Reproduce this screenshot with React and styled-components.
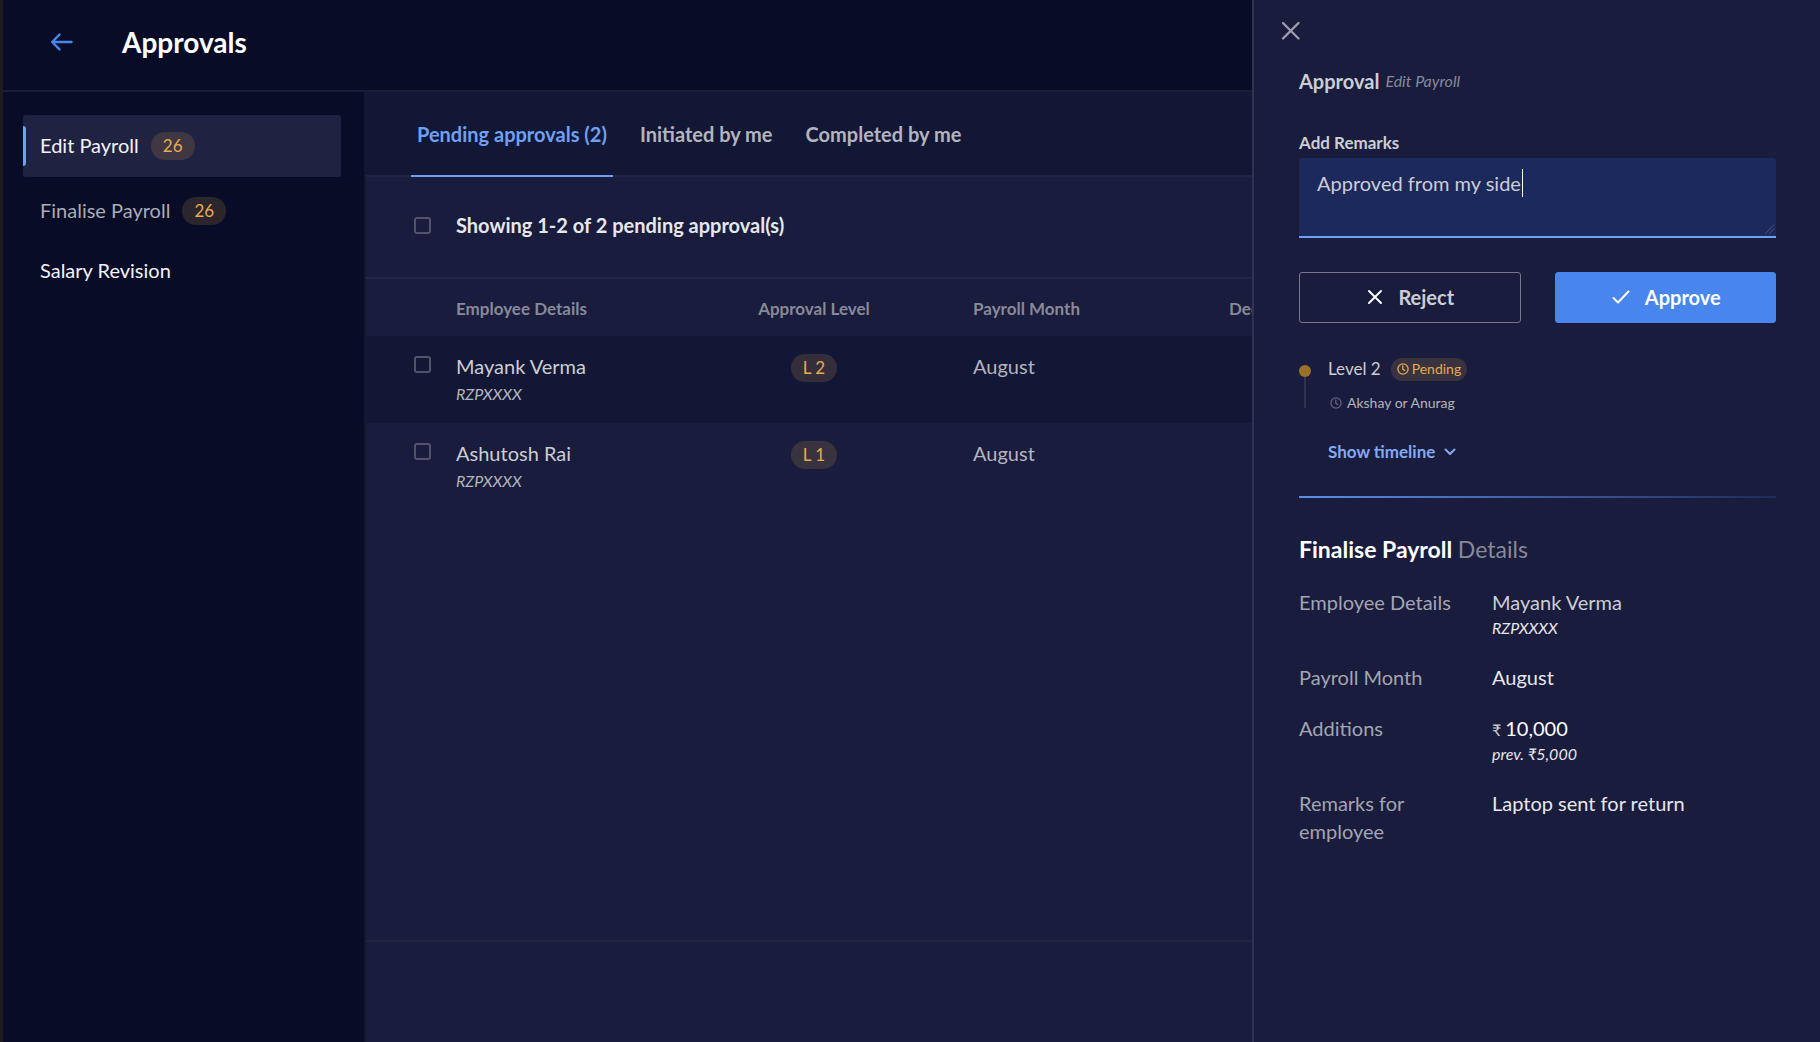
import React, { useLayoutEffect, useRef, useState } from "react";
import styled, { createGlobalStyle, css } from "styled-components";

const c = {
  base: "#080c26",
  band: "#131736",
  panel: "#191c3c",
  line: "#20243f",
  selected: "#1f2341",
  blue: "#4885ed",
  blueSoft: "#6ea0f4",
  white: "#ffffff",
  bright: "#e6e7eb",
  text: "#cccdd4",
  soft: "#b3b4bf",
  muted: "#878999",
  amber: "#e9a951",
};

const Global = createGlobalStyle`
  *, *::before, *::after { box-sizing: border-box; }
  body { margin: 0; background: ${c.base}; }
  body, button, input, textarea { font-family: Lato, "Open Sans", sans-serif; }
  h1, h2, p, ul, dl, dd { margin: 0; padding: 0; }
`;

const Page = styled.div`
  display: flex;
  flex-direction: column;
  min-height: 100vh;
  border-left: 3px solid #1d1d1f;
  background: ${c.base};
  color: ${c.text};
  font-size: 20px;
  line-height: 28px;
  overflow: hidden;
`;

const Header = styled.header`
  display: flex;
  align-items: center;
  gap: 47px;
  height: 92px;
  padding: 0 46px 6px;
  border-bottom: 2px solid #191d37;
`;

const IconButton = styled.button`
  display: flex;
  padding: 0;
  border: 0;
  background: none;
  color: ${(p) => p.$color};
  cursor: pointer;
`;

const Title = styled.h1`
  color: ${c.white};
  font-size: 28px;
  line-height: 36px;
  font-weight: 700;
`;

const Body = styled.div`
  display: flex;
  flex: 1;
`;

const Sidebar = styled.nav`
  flex: none;
  width: 363px;
  padding: 23px 23px 23px 20px;
  border-right: 2px solid #13172f;
`;

const NavList = styled.ul`
  display: flex;
  flex-direction: column;
  gap: 3px;
  list-style: none;
`;

const NavLink = styled.a`
  position: relative;
  display: flex;
  align-items: center;
  gap: 12px;
  padding: 11px 17px 13px;
  border-radius: 3px;
  color: ${(p) => p.$color};
  text-decoration: none;
  ${(p) =>
    p.$active &&
    css`
      background: ${c.selected};
      &::before {
        content: "";
        position: absolute;
        left: 0;
        top: 11px;
        bottom: 11px;
        width: 3px;
        border-radius: 0 3px 3px 0;
        background: ${c.blueSoft};
      }
    `}
`;

const Pill = styled.span`
  display: inline-flex;
  align-items: center;
  justify-content: center;
  gap: 3px;
  height: ${(p) => (p.$small ? 23 : 28)}px;
  padding: ${(p) => (p.$small ? "0 6px" : "0 12px")};
  border-radius: 14px;
  background: rgba(233, 169, 81, 0.16);
  color: ${c.amber};
  font-size: ${(p) => (p.$small ? 14 : 17)}px;
`;

const NavPill = styled(Pill)`
  margin: 6px 0 4px;
`;

const Main = styled.main`
  display: flex;
  flex: 1;
  flex-direction: column;
  min-width: 0;
  background: ${c.panel};
`;

const Tabs = styled.div`
  display: flex;
  gap: 21px;
  padding: 0 45px;
  border-bottom: 2px solid ${c.line};
  background: ${c.band};
`;

const Tab = styled.button`
  height: 85px;
  margin-bottom: -2px;
  padding: 0 6px;
  border: 0;
  border-bottom: 2px solid ${(p) => (p.$active ? c.blueSoft : "transparent")};
  background: none;
  color: ${(p) => (p.$active ? c.blueSoft : c.soft)};
  font-size: 20px;
  line-height: 28px;
  font-weight: 700;
  cursor: pointer;
`;

const Summary = styled.label`
  display: flex;
  align-items: center;
  gap: 25px;
  height: 102px;
  padding: 0 48px 4px;
  border-bottom: 2px solid #202746;
  color: ${c.bright};
  font-weight: 700;
`;

const Check = styled.input.attrs({ type: "checkbox" })`
  appearance: none;
  display: block;
  width: 17px;
  height: 17px;
  margin: 0;
  border: 2px solid #515469;
  border-radius: 3px;
  &:checked {
    background: ${c.blue};
  }
`;

const Table = styled.table`
  width: 100%;
  border-collapse: collapse;
  table-layout: fixed;
`;

const Th = styled.th`
  width: ${(p) => (p.$w ? `${p.$w}px` : "auto")};
  height: 57px;
  padding: 3px 0 0;
  color: ${c.muted};
  font-size: 17px;
  font-weight: 700;
  text-align: ${(p) => (p.$center ? "center" : "left")};
`;

const Row = styled.tr`
  background: ${(p) => (p.$shaded ? c.band : "transparent")};
`;

const Td = styled.td`
  padding: 16px 0 15px;
  vertical-align: top;
  text-align: ${(p) => (p.$center ? "center" : "left")};
  color: ${(p) => (p.$soft ? c.soft : c.text)};
`;

const CheckTd = styled(Td)`
  padding: 20px 48px;
`;

const Small = styled.p`
  color: ${(p) => (p.$bright ? c.bright : c.soft)};
  font-size: 16px;
  line-height: ${(p) => (p.$bright ? 24 : 28)}px;
  font-style: italic;
`;

const Footer = styled.footer`
  height: 102px;
  margin-top: auto;
  border-top: 2px solid ${c.line};
`;

const Drawer = styled.aside`
  position: fixed;
  top: 0;
  right: 0;
  bottom: 0;
  width: 568px;
  padding: 18px 44px 24px 45px;
  border-left: 2px solid #2f3250;
  background: ${c.panel};
  overflow-y: auto;
`;

const CloseRow = styled.div`
  display: flex;
  margin-left: -21px;
`;

const DrawerTitle = styled.h2`
  display: flex;
  align-items: center;
  gap: 6px;
  margin-top: 23px;
  font-size: 20px;
  line-height: 28px;
  font-weight: 700;
`;

const TitleNote = styled.em`
  color: ${c.muted};
  font-size: 16px;
  font-weight: 400;
`;

const FieldLabel = styled.label`
  display: block;
  margin-top: 36px;
  padding-bottom: 3px;
  font-size: 17px;
  line-height: 24px;
  font-weight: 700;
`;

const Field = styled.div`
  position: relative;
  display: flex;
`;

const TextArea = styled.textarea`
  width: 100%;
  height: 80px;
  padding: 11px 18px;
  border: 0;
  border-bottom: 2px solid ${c.blueSoft};
  border-radius: 3px 3px 0 0;
  outline: 0;
  background: #1c295c;
  color: ${c.text};
  caret-color: transparent;
  font-size: 20px;
  line-height: 28px;
  resize: none;
`;

const Caret = styled.span`
  position: absolute;
  top: 11px;
  width: 1px;
  height: 28px;
  background: ${c.white};
`;

const Grip = styled.svg`
  position: absolute;
  right: 1px;
  bottom: 4px;
`;

const Actions = styled.div`
  display: grid;
  grid-template-columns: 1fr 1fr;
  gap: 34px;
  margin-top: 34px;
`;

const Action = styled.button`
  display: flex;
  align-items: center;
  justify-content: center;
  gap: 15px;
  height: 51px;
  padding: 0 4px 2px 6px;
  border: 1px solid ${(p) => (p.$primary ? c.blue : "#767889")};
  border-radius: 3px;
  background: ${(p) => (p.$primary ? c.blue : "transparent")};
  color: ${(p) => (p.$primary ? c.white : c.text)};
  font-size: 20px;
  line-height: 28px;
  font-weight: 700;
  cursor: pointer;
  svg {
    color: ${c.white};
  }
`;

const Timeline = styled.div`
  display: grid;
  grid-template-columns: 12px 1fr;
  column-gap: 17px;
  margin-top: 32px;
`;

const Track = styled.div`
  display: flex;
  flex-direction: column;
  align-items: center;
  padding-top: 10px;
  &::before {
    content: "";
    width: 12px;
    height: 12px;
    border-radius: 50%;
    background: #9b7128;
  }
  &::after {
    content: "";
    width: 2px;
    height: 31px;
    background: #30334f;
  }
`;

const Level = styled.div`
  display: flex;
  align-items: center;
  gap: 10px;
  font-size: 17px;
  line-height: 28px;
`;

const Approvers = styled.div`
  display: flex;
  align-items: center;
  gap: 5px;
  margin-top: 7px;
  padding-left: 2px;
  color: ${c.soft};
  font-size: 14px;
  line-height: 26px;
  svg {
    color: #60637a;
  }
`;

const TimelineToggle = styled.button`
  display: flex;
  align-items: center;
  gap: 9px;
  margin-top: 22px;
  padding: 0;
  border: 0;
  background: none;
  color: #82a9f3;
  font-size: 17px;
  line-height: 28px;
  font-weight: 700;
  cursor: pointer;
`;

const Divider = styled.div`
  height: 2px;
  margin-top: 30px;
  background: linear-gradient(90deg, #5a8fe6, #222b5c);
`;

const DetailsTitle = styled.h2`
  margin-top: 35px;
  color: ${c.white};
  font-size: 23px;
  line-height: 32px;
  font-weight: 700;
`;

const Light = styled.span`
  color: ${c.muted};
  font-weight: 400;
`;

const Details = styled.dl`
  display: grid;
  grid-template-columns: 163px 1fr;
  column-gap: 30px;
  row-gap: 23px;
  margin-top: 23px;
`;

const Term = styled.dt`
  color: #a3a5b2;
`;

const Value = styled.dd`
  color: ${(p) => p.$color || c.bright};
`;

const Rupee = styled.span`
  margin-right: 4px;
  color: ${c.text};
  font-size: 16px;
  line-height: 0;
`;

const Icon = ({ w, h, box, sw = 2, children }) => (
  <svg
    width={w}
    height={h}
    viewBox={box || `0 0 ${w} ${h}`}
    fill="none"
    stroke="currentColor"
    strokeWidth={sw}
    strokeLinecap="round"
    strokeLinejoin="round"
    aria-hidden="true"
  >
    {children}
  </svg>
);

const Clock = () => (
  <Icon w={12} h={12} sw={1.3}>
    <circle cx="6" cy="6" r="5.1" />
    <path d="M5.8 3v3.2l1.8 1.2" />
  </Icon>
);

const navItems = [
  { name: "Edit Payroll", count: 26, color: "#f3f3f6", active: true },
  { name: "Finalise Payroll", count: 26, color: "#a9abb6" },
  { name: "Salary Revision", color: "#f3f3f6" },
];

const tabs = ["Pending approvals (2)", "Initiated by me", "Completed by me"];

const rows = [
  { name: "Mayank Verma", id: "RZPXXXX", level: "L 2", month: "August" },
  { name: "Ashutosh Rai", id: "RZPXXXX", level: "L 1", month: "August" },
];

function RemarksField() {
  const ref = useRef(null);
  const [text, setText] = useState("Approved from my side");
  const [left, setLeft] = useState(0);

  useLayoutEffect(() => {
    const style = getComputedStyle(ref.current);
    const ctx = document.createElement("canvas").getContext("2d");
    ctx.font = `${style.fontSize} ${style.fontFamily}`;
    setLeft(Math.round(parseFloat(style.paddingLeft) + ctx.measureText(text).width) + 1);
  }, [text]);

  return (
    <Field>
      <TextArea
        id="remarks"
        ref={ref}
        value={text}
        spellCheck={false}
        onChange={(e) => setText(e.target.value)}
      />
      <Caret style={{ left }} />
      <Grip width="10" height="10" viewBox="0 0 10 10" stroke="#4a5580" aria-hidden="true">
        <path d="M0.5 9.5L9 0.5M4.5 9.5L9 4.5" />
      </Grip>
    </Field>
  );
}

export default function App() {
  const [tab, setTab] = useState(tabs[0]);

  return (
    <Page>
      <Global />
      <Header>
        <IconButton $color={c.blue} aria-label="Back">
          <Icon w={26} h={20} sw={2.4}>
            <path d="M22.5 10H3.2M10.5 2.6L3.2 10l7.3 7.4" />
          </Icon>
        </IconButton>
        <Title>Approvals</Title>
      </Header>

      <Body>
        <Sidebar>
          <NavList>
            {navItems.map((n) => (
              <li key={n.name}>
                <NavLink href="#" $color={n.color} $active={n.active}>
                  {n.name}
                  {n.count && <NavPill>{n.count}</NavPill>}
                </NavLink>
              </li>
            ))}
          </NavList>
        </Sidebar>

        <Main>
          <Tabs role="tablist">
            {tabs.map((t) => (
              <Tab
                key={t}
                role="tab"
                aria-selected={t === tab}
                $active={t === tab}
                onClick={() => setTab(t)}
              >
                {t}
              </Tab>
            ))}
          </Tabs>
          <Summary>
            <Check />
            Showing 1-2 of 2 pending approval(s)
          </Summary>
          <Table>
            <thead>
              <tr>
                <Th $w={90} />
                <Th $w={199}>Employee Details</Th>
                <Th $w={318} $center>
                  Approval Level
                </Th>
                <Th $w={256}>Payroll Month</Th>
                <Th>Deductions</Th>
              </tr>
            </thead>
            <tbody>
              {rows.map((r, i) => (
                <Row key={r.name} $shaded={i % 2 === 0}>
                  <CheckTd>
                    <Check aria-label={`Select ${r.name}`} />
                  </CheckTd>
                  <Td>
                    {r.name}
                    <Small>{r.id}</Small>
                  </Td>
                  <Td $center>
                    <Pill>{r.level}</Pill>
                  </Td>
                  <Td $soft>{r.month}</Td>
                  <Td />
                </Row>
              ))}
            </tbody>
          </Table>
          <Footer />
        </Main>
      </Body>

      <Drawer>
        <CloseRow>
          <IconButton $color="#9c9eac" aria-label="Close">
            <Icon w={26} h={26} sw={2.3}>
              <path d="M5 5l15.5 15.5M20.5 5L5 20.5" />
            </Icon>
          </IconButton>
        </CloseRow>
        <DrawerTitle>
          Approval <TitleNote>Edit Payroll</TitleNote>
        </DrawerTitle>

        <FieldLabel htmlFor="remarks">Add Remarks</FieldLabel>
        <RemarksField />

        <Actions>
          <Action>
            <Icon w={16} h={16}>
              <path d="M2 2l12 12M14 2L2 14" />
            </Icon>
            Reject
          </Action>
          <Action $primary>
            <Icon w={18} h={16}>
              <path d="M1.5 9l4.5 4.5L16.5 2.5" />
            </Icon>
            Approve
          </Action>
        </Actions>

        <Timeline>
          <Track />
          <div>
            <Level>
              Level 2
              <Pill $small>
                <Clock />
                Pending
              </Pill>
            </Level>
            <Approvers>
              <Clock />
              Akshay or Anurag
            </Approvers>
            <TimelineToggle>
              Show timeline
              <Icon w={12} h={8}>
                <path d="M1.5 1.5L6 6l4.5-4.5" />
              </Icon>
            </TimelineToggle>
          </div>
        </Timeline>

        <Divider />

        <DetailsTitle>
          Finalise Payroll <Light>Details</Light>
        </DetailsTitle>
        <Details>
          <Term>Employee Details</Term>
          <Value $color={c.text}>
            Mayank Verma
            <Small $bright>RZPXXXX</Small>
          </Value>
          <Term>Payroll Month</Term>
          <Value>August</Value>
          <Term>Additions</Term>
          <Value $color={c.white}>
            <Rupee>₹</Rupee>10,000
            <Small $bright>prev. ₹5,000</Small>
          </Value>
          <Term>Remarks for employee</Term>
          <Value>Laptop sent for return</Value>
        </Details>
      </Drawer>
    </Page>
  );
}
